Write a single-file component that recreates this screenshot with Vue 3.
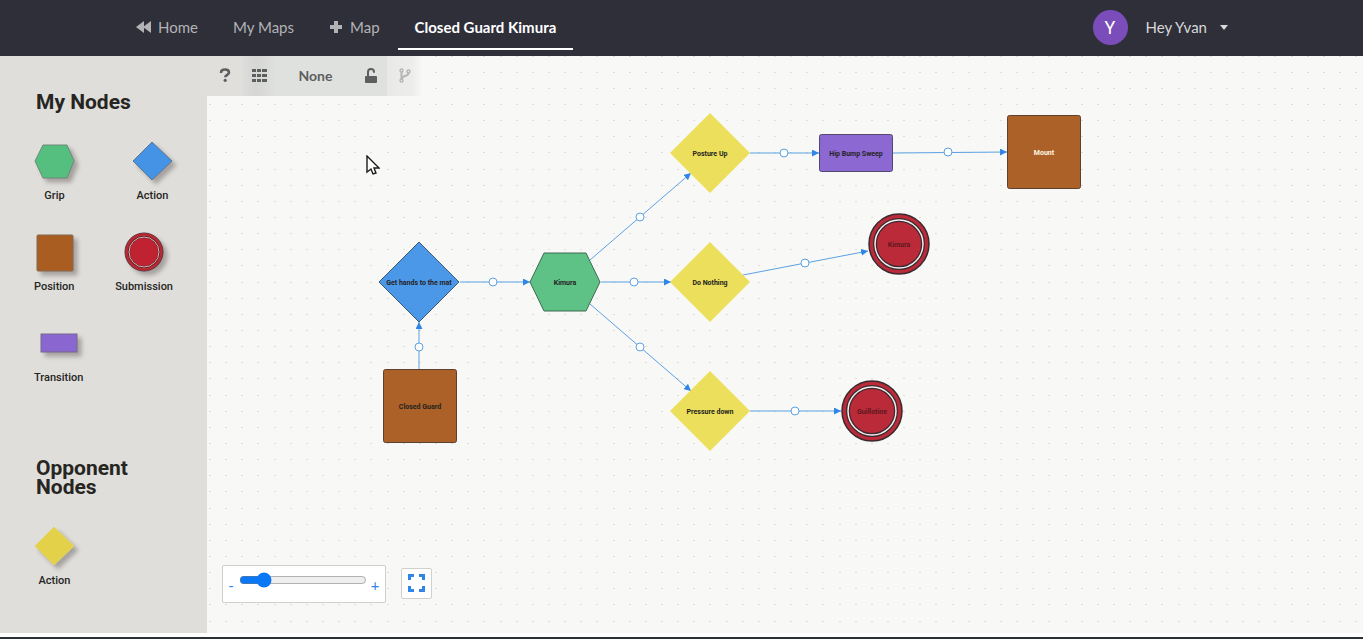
<script setup>
import { ref } from 'vue'

const zoom = ref(15)

const dots = [0, 16, 32, 48, 65, 81, 97]

const nodes = [
  { kind: 'diamond', x: 419, y: 282, r: 40, fill: '#4c98e8', line: '#3f5877', label: 'Get hands to the mat' },
  { kind: 'hexagon', x: 565, y: 282, fill: '#5ec287', line: '#3d6b50', label: 'Kimura' },
  { kind: 'square', x: 420, y: 406, w: 73, h: 73, fill: '#ab6127', line: '#5e4030', label: 'Closed Guard' },
  { kind: 'diamond', x: 710, y: 153, r: 40, fill: '#ecdf5b', line: 'none', label: 'Posture Up' },
  { kind: 'diamond', x: 710, y: 282, r: 40, fill: '#ecdf5b', line: 'none', label: 'Do Nothing' },
  { kind: 'diamond', x: 710, y: 411, r: 40, fill: '#ecdf5b', line: 'none', label: 'Pressure down' },
  { kind: 'square', x: 856, y: 153, w: 73, h: 37, fill: '#8c68d2', line: '#55486f', label: 'Hip Bump Sweep' },
  { kind: 'square', x: 1044, y: 152, w: 73, h: 73, fill: '#ab6127', line: '#5e4030', label: 'Mount', light: true },
  { kind: 'ring', x: 899, y: 244, fill: '#bb2a39', line: '#3a2a2f', label: 'Kimura' },
  { kind: 'ring', x: 872, y: 411, fill: '#bb2a39', line: '#3a2a2f', label: 'Guillotine' },
]

const edges = [
  { from: [419, 370], mid: [419, 347], to: [419, 322] },
  { from: [460, 282], mid: [493, 282], to: [530, 282] },
  { from: [590, 260], mid: [640, 217], to: [691, 173] },
  { from: [601, 282], mid: [634, 282], to: [671, 282] },
  { from: [590, 304], mid: [640, 347], to: [691, 391] },
  { from: [750, 153], mid: [784, 153], to: [819, 153] },
  { from: [893, 153], mid: [948, 152], to: [1007, 152] },
  { from: [743, 275], mid: [805, 263], to: [868, 251] },
  { from: [750, 411], mid: [795, 411], to: [841, 411] },
]

const diamond = (n) => `${n.x - n.r},${n.y} ${n.x},${n.y - n.r} ${n.x + n.r},${n.y} ${n.x},${n.y + n.r}`
const hexagon = (n) =>
  `${n.x - 35},${n.y} ${n.x - 21},${n.y - 29} ${n.x + 21},${n.y - 29} ${n.x + 35},${n.y} ${n.x + 21},${n.y + 29} ${n.x - 21},${n.y + 29}`
</script>

<template>
  <div class="page">
    <header class="top">
      <div class="top-inner">
        <nav class="nav">
          <a href="#" class="nav-item">
            <svg class="nav-icon" width="16" height="14" viewBox="0 0 16 14"><path d="M9 1v12L1 7zM16 1v12L8 7z" /></svg>
            Home
          </a>
          <a href="#" class="nav-item">My Maps</a>
          <a href="#" class="nav-item">
            <svg class="nav-icon" width="14" height="14" viewBox="0 0 14 14"><path d="M5 1h4v4h4v4H9v4H5V9H1V5h4z" /></svg>
            Map
          </a>
          <a href="#" class="nav-item active">Closed Guard Kimura</a>
        </nav>
        <button class="user">
          <span class="avatar">Y</span>
          <span>Hey Yvan</span>
          <svg class="caret" width="8" height="5" viewBox="0 0 8 5"><path d="M0 0h8L4 5z" /></svg>
        </button>
      </div>
    </header>

    <main class="work">
      <aside class="side">
        <section>
          <h2>My Nodes</h2>
          <div class="palette">
            <div class="tile">
              <svg width="41" height="40" viewBox="0 0 41 40"><polygon points="1,20 9,4 33,4 40,20 33,37 9,37" fill="#55bf7f" stroke="#70877a" /></svg>
              <span>Grip</span>
            </div>
            <div class="tile">
              <svg width="41" height="40" viewBox="0 0 41 40"><polygon points="1,20 20,1 40,20 20,39" fill="#4593e5" stroke="#5d7793" /></svg>
              <span>Action</span>
            </div>
          </div>
          <div class="palette">
            <div class="tile">
              <svg width="37" height="40" viewBox="0 0 37 40"><rect x="1" y="3" width="36" height="36" rx="1" fill="#a95d20" stroke="#84684f" /></svg>
              <span>Position</span>
            </div>
            <div class="tile">
              <svg width="41" height="40" viewBox="0 0 41 40">
                <circle cx="20" cy="20" r="19" fill="#b82834" stroke="#5f3238" />
                <circle cx="20" cy="20" r="15" fill="#c02232" stroke="#4b2026" stroke-width="2" />
                <circle cx="20" cy="20" r="15" fill="none" stroke="#d9b8b4" />
              </svg>
              <span>Submission</span>
            </div>
          </div>
          <div class="palette">
            <div class="tile">
              <svg width="37" height="40" viewBox="0 0 37 40"><rect x="1" y="11" width="36" height="18" fill="#8a66d0" stroke="#75688d" /></svg>
              <span>Transition</span>
            </div>
          </div>
        </section>
        <section>
          <h2>Opponent Nodes</h2>
          <div class="palette">
            <div class="tile">
              <svg width="41" height="40" viewBox="0 0 41 40"><polygon points="1,20 20,1 40,20 20,39" fill="#e3d249" stroke="#e0d36a" /></svg>
              <span>Action</span>
            </div>
          </div>
        </section>
      </aside>

      <div class="canvas">
        <svg class="graph" width="100%" height="100%">
          <defs>
            <pattern id="grid" x="2" y="48" width="113" height="113" patternUnits="userSpaceOnUse">
              <template v-for="y in dots" :key="y">
                <rect v-for="x in dots" :key="x" :x="x" :y="y" width="2" height="1" fill="#dededc" />
              </template>
            </pattern>
            <marker id="arrow" viewBox="0 0 7 7" refX="7" refY="3.5" markerWidth="7" markerHeight="7" markerUnits="userSpaceOnUse" orient="auto">
              <path d="M0 0 7 3.500 0 7z" fill="#2f86e6" />
            </marker>
          </defs>
          <rect width="100%" height="100%" fill="url(#grid)" />
          <g transform="translate(-207 -56)">
            <g v-for="(e, i) in edges" :key="i" class="edge">
              <line :x1="e.from[0]" :y1="e.from[1]" :x2="e.to[0]" :y2="e.to[1]" marker-end="url(#arrow)" />
              <circle :cx="e.mid[0]" :cy="e.mid[1]" r="4" />
            </g>
            <g v-for="(n, i) in nodes" :key="i">
              <polygon v-if="n.kind === 'diamond'" :points="diamond(n)" :fill="n.fill" :stroke="n.line" />
              <polygon v-else-if="n.kind === 'hexagon'" :points="hexagon(n)" :fill="n.fill" :stroke="n.line" />
              <rect v-else-if="n.kind === 'square'" :x="n.x - n.w / 2" :y="n.y - n.h / 2" :width="n.w" :height="n.h" rx="2" :fill="n.fill" :stroke="n.line" />
              <template v-else>
                <circle :cx="n.x" :cy="n.y" r="30" :fill="n.fill" :stroke="n.line" stroke-width="1.500" />
                <circle :cx="n.x" :cy="n.y" r="24" :fill="n.fill" :stroke="n.line" stroke-width="4" />
                <circle :cx="n.x" :cy="n.y" r="24" fill="none" stroke="#f6eeee" stroke-width="1.500" />
              </template>
              <text :x="n.x" :y="n.y + 3" :class="{ light: n.light, faint: n.kind === 'ring' }">{{ n.label }}</text>
            </g>
          </g>
        </svg>

        <div class="toolbar">
          <button class="help" aria-label="Help">
            <svg width="12" height="14" viewBox="0 0 12 14"><path d="M2 5C2 2 4 1.500 6 1.500S10 2.500 10 4.500C10 7 6.300 6.600 6.300 9.200" fill="none" stroke="#5d5e5f" stroke-width="2.600" /><circle cx="6.200" cy="12.300" r="1.600" fill="#5d5e5f" /></svg>
          </button>
          <button class="cells" aria-label="Grid">
            <svg width="15" height="13" viewBox="0 0 15 13" fill="#5d5e5f"><path d="M0 0h4v3H0zM5 0h4v3H5zM10 0h5v3h-5zM0 5h4v3H0zM5 5h4v3H5zM10 5h5v3h-5zM0 10h4v3H0zM5 10h4v3H5zM10 10h5v3h-5z" /></svg>
          </button>
          <button class="none">None</button>
          <button class="lock" aria-label="Unlock">
            <svg width="14" height="15" viewBox="0 0 14 15"><path d="M4 8V4a3 3 0 0 1 6 0" fill="none" stroke="#5d5e5f" stroke-width="2" stroke-linecap="round" /><rect x="1" y="8" width="12" height="7" rx="1" fill="#5d5e5f" /></svg>
          </button>
          <button class="branch" aria-label="Branch">
            <svg width="12" height="15" viewBox="0 0 12 15" fill="none" stroke="#b4b5b5" stroke-width="1.400"><circle cx="2.500" cy="2.500" r="1.500" /><circle cx="2.500" cy="12.500" r="1.500" /><circle cx="9.500" cy="3.500" r="1.500" /><path d="M2.500 4v7M9.500 5c0 4-7 2-7 6" stroke-width="2" /></svg>
          </button>
        </div>

        <svg class="pointer" width="14" height="20" viewBox="0 0 14 20"><path d="M1 1v16l4-3 2 5 3-1-2-5h5z" fill="#fff" stroke="#1c1c1c" stroke-width="1.400" /></svg>

        <div class="controls">
          <div class="zoom">
            <button aria-label="Zoom out">-</button>
            <input v-model="zoom" type="range" min="0" max="100" aria-label="Zoom" />
            <button aria-label="Zoom in">+</button>
          </div>
          <button class="fit" aria-label="Full screen">
            <svg width="17" height="18" viewBox="0 0 17 18" fill="none" stroke="#2f86e6" stroke-width="3"><path d="M1.500 6V1.500H6M11 1.500h4.500V6M15.500 12v4.500H11M6 16.500H1.500V12" /></svg>
          </button>
        </div>
      </div>
    </main>
    <footer class="foot"></footer>
  </div>
</template>

<style>
body {
  background: #fff;
}
</style>

<style scoped>
* {
  box-sizing: border-box;
}
button {
  border: 0;
  padding: 0;
  background: none;
  font: inherit;
  color: inherit;
}
.page {
  min-height: 100vh;
  display: flex;
  flex-direction: column;
  font-family: Lato, "Liberation Sans", sans-serif;
}
.top {
  background: #2f2f39;
  color: #d8d8da;
}
.top-inner {
  display: flex;
  justify-content: space-between;
  max-width: 1127px;
  height: 56px;
  margin: 0 auto;
}
.nav {
  display: flex;
  gap: 1px;
}
.nav-item {
  display: flex;
  align-items: center;
  gap: 7px;
  height: 50px;
  padding: 6px 17px 0;
  border-bottom: 2px solid transparent;
  font-size: 15px;
  color: #b3b3b6;
  text-decoration: none;
  white-space: nowrap;
}
.nav-item.active {
  font-weight: 700;
  color: #fff;
  border-color: #fff;
}
.nav-icon {
  fill: #b3b3b6;
}
.user {
  display: flex;
  align-items: center;
  gap: 18px;
  padding: 0 17px 2px 0;
  font-size: 15px;
}
.avatar {
  width: 35px;
  height: 35px;
  border-radius: 50%;
  background: #7b4dba;
  color: #fff;
  font: 18px/35px Roboto, sans-serif;
  text-align: center;
}
.caret {
  fill: #d8d8da;
  margin-left: -5px;
}
.work {
  flex: 1;
  display: flex;
}
.side {
  flex: none;
  display: flex;
  flex-direction: column;
  gap: 73px;
  width: 207px;
  padding: 37px 34px 32px;
  background: #dfdeda;
  color: #262522;
  font-family: Roboto, sans-serif;
}
section {
  display: flex;
  flex-direction: column;
  gap: 28px;
}
h2 {
  margin: 0;
  padding: 0 2px;
  font-size: 21px;
  line-height: 19px;
  font-weight: 700;
}
h2 + .palette {
  padding-top: 1px;
}
.palette {
  display: flex;
  justify-content: space-between;
}
.tile {
  display: flex;
  flex-direction: column;
  align-items: center;
  gap: 7px;
  font-size: 11px;
  line-height: 16px;
  font-weight: 500;
}
.tile svg {
  overflow: visible;
  filter: drop-shadow(4px 4px 2px rgba(60, 50, 50, 0.35));
}
.canvas {
  position: relative;
  flex: 1;
  background: #f8f8f6;
}
.graph {
  position: absolute;
  inset: 0;
}
.edge line {
  stroke: #5ba1e3;
}
.edge circle {
  fill: #fff;
  stroke: #5ba1e3;
}
.graph text {
  font: 700 7px Roboto, sans-serif;
  text-anchor: middle;
  fill: #25231f;
}
.graph text.light {
  fill: #fff8e8;
}
.graph text.faint {
  fill: #5e1820;
}
.toolbar {
  position: absolute;
  top: 0;
  left: 0;
  display: flex;
  height: 40px;
  color: #5d5e5f;
}
.toolbar button {
  display: flex;
  align-items: center;
  justify-content: center;
  padding-bottom: 2px;
}
.help {
  width: 36px;
  background: #e0dfdc;
}
.toolbar .cells {
  width: 33px;
  background: linear-gradient(90deg, #dcdcda, #d6d7d5 40%, #dfe1df);
}
.toolbar .none {
  width: 79px;
  background: #dfe1df;
  font-size: 14px;
  font-weight: 700;
}
.toolbar .lock {
  width: 32px;
  background: #dfe1df;
}
.toolbar .branch {
  width: 36px;
  background: linear-gradient(90deg, #e9e9e8, #ededec 70%, #f8f8f6);
}
.pointer {
  position: absolute;
  left: 159px;
  top: 99px;
}
.controls {
  position: absolute;
  left: 15px;
  bottom: 30px;
  display: flex;
  align-items: center;
  gap: 15px;
  color: #2f86e6;
}
.zoom {
  display: flex;
  align-items: center;
  width: 164px;
  height: 38px;
  padding-right: 2px;
  border: 1px solid #d0d0cd;
  border-radius: 2px;
  background: #fff;
  font-size: 15px;
}
.zoom button {
  flex: 1;
  padding-top: 2px;
}
.zoom input {
  width: 128px;
  height: 16px;
  margin: 0 0 8px;
  accent-color: #0a78f5;
}
.fit {
  display: flex;
  align-items: center;
  justify-content: center;
  width: 31px;
  height: 31px;
  margin-bottom: 2px;
  border: 1px solid #d0d0cd;
  border-radius: 2px;
  background: #fff;
}
.foot {
  height: 6px;
  border-bottom: 2px solid #2b2f38;
  background: #fff;
}
</style>
